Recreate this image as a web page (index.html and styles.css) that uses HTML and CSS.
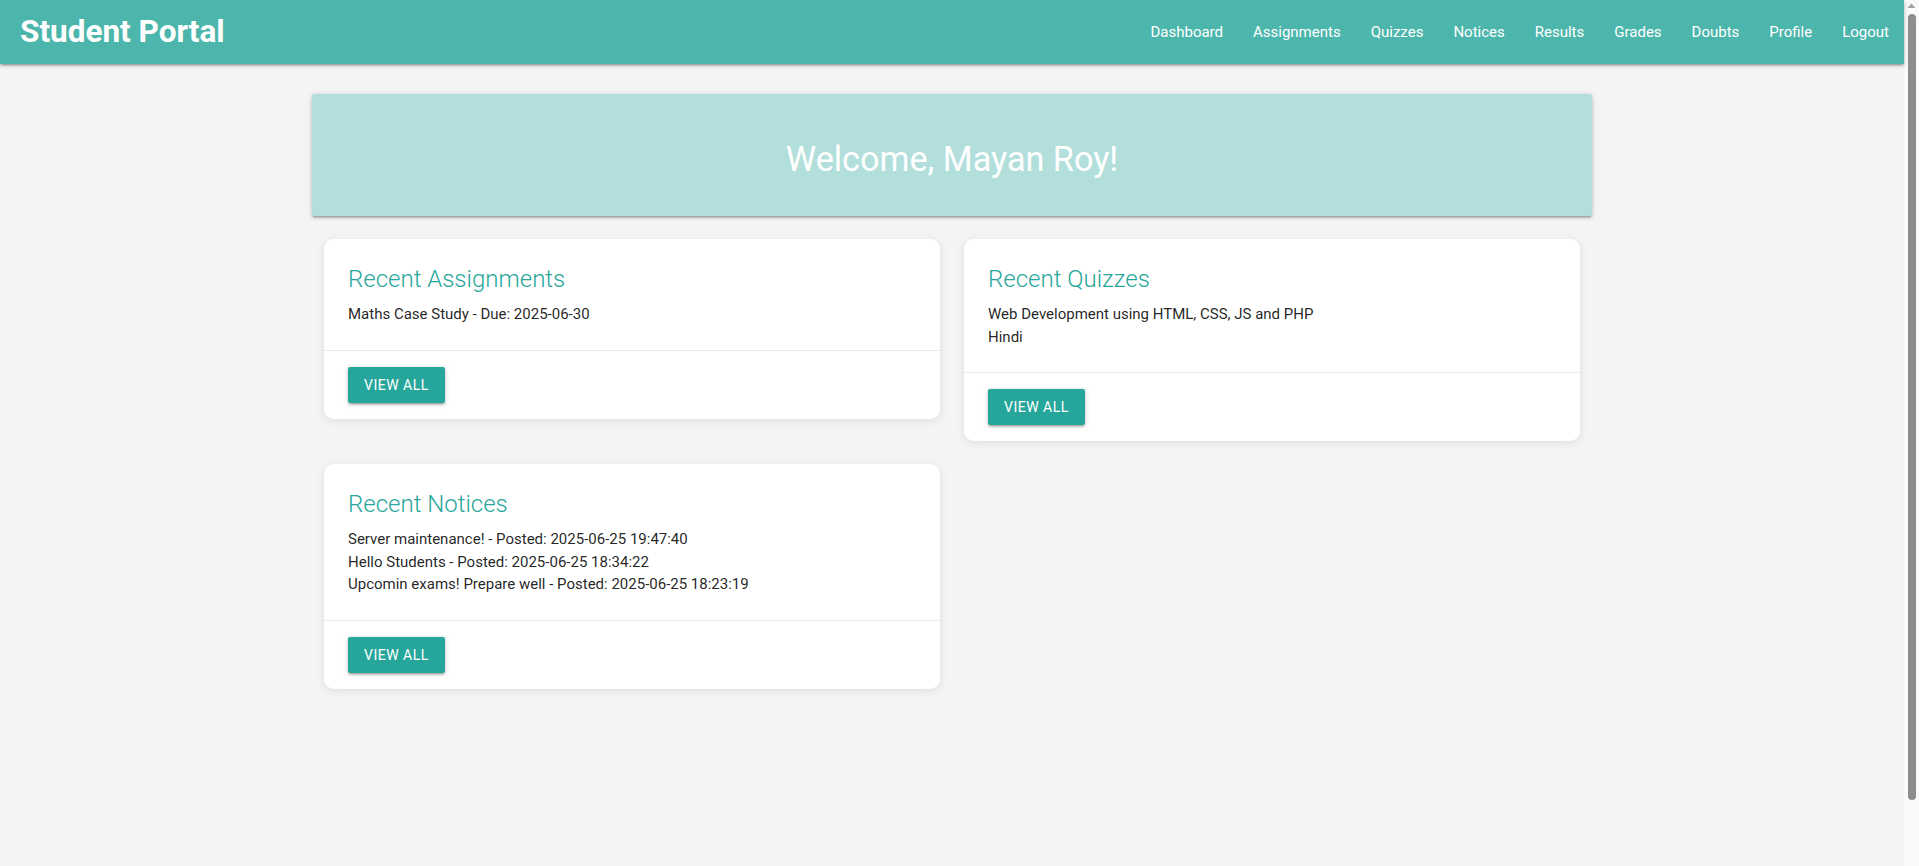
FILE: index.html
```html
<!DOCTYPE html>
<html lang="en">
<head>
<meta charset="utf-8">
<title>Student Portal</title>
<link rel="stylesheet" href="styles.css">
</head>
<body>
<div class="page">
  <nav class="navbar">
    <div class="nav-wrapper">
      <a class="brand-logo" href="#">Student Portal</a>
      <ul class="nav-links">
        <li><a href="#">Dashboard</a></li>
        <li><a href="#">Assignments</a></li>
        <li><a href="#">Quizzes</a></li>
        <li><a href="#">Notices</a></li>
        <li><a href="#">Results</a></li>
        <li><a href="#">Grades</a></li>
        <li><a href="#">Doubts</a></li>
        <li><a href="#">Profile</a></li>
        <li><a href="#">Logout</a></li>
      </ul>
    </div>
  </nav>

  <main class="container">
    <div class="welcome-panel">
      <h4 class="welcome-title">Welcome, Mayan Roy!</h4>
    </div>

    <div class="card-grid">
      <div class="col">
        <div class="card">
          <div class="card-content">
            <span class="card-title">Recent Assignments</span>
            <p class="item">Maths Case Study - Due: 2025-06-30</p>
          </div>
          <div class="card-action">
            <a class="btn" href="#">View All</a>
          </div>
        </div>
      </div>
      <div class="col">
        <div class="card">
          <div class="card-content">
            <span class="card-title">Recent Quizzes</span>
            <p class="item">Web Development using HTML, CSS, JS and PHP</p>
            <p class="item">Hindi</p>
          </div>
          <div class="card-action">
            <a class="btn" href="#">View All</a>
          </div>
        </div>
      </div>
      <div class="col">
        <div class="card">
          <div class="card-content">
            <span class="card-title">Recent Notices</span>
            <p class="item">Server maintenance! - Posted: 2025-06-25 19:47:40</p>
            <p class="item">Hello Students - Posted: 2025-06-25 18:34:22</p>
            <p class="item">Upcomin exams! Prepare well - Posted: 2025-06-25 18:23:19</p>
          </div>
          <div class="card-action">
            <a class="btn" href="#">View All</a>
          </div>
        </div>
      </div>
    </div>
  </main>
</div>
<div class="scrollbar" aria-hidden="true">
  <svg class="scroll-arrow" width="15" height="12" viewBox="0 0 15 12"><polygon points="3.5,8 7.5,3.5 11.5,8" fill="#a3a3a3"/></svg>
  <div class="scroll-thumb"></div>
</div>
</body>
</html>
```

FILE: styles.css
```css
html {
  font-size: 15px;
}

body {
  margin: 0;
  height: 866px;
  overflow: hidden;
  display: flex;
  background: #f4f4f4;
  font-family: Roboto, "Noto Sans", "Liberation Sans", sans-serif;
  font-weight: 400;
  line-height: 1.5;
  color: rgba(0, 0, 0, 0.87);
}

.page {
  flex: 1;
  min-width: 0;
}

.scrollbar {
  width: 15px;
  flex: none;
  background: #fafafa;
  display: flex;
  flex-direction: column;
  align-items: center;
}

.scroll-arrow {
  display: block;
  flex: none;
}

.scroll-thumb {
  width: 8px;
  height: 786px;
  margin-top: 2px;
  border-radius: 4px;
  background: #8e8e8e;
}

.navbar {
  background: #4db6ac;
  height: 64px;
  line-height: 64px;
  color: #fff;
  box-shadow: 0 2px 2px 0 rgba(0, 0, 0, 0.14), 0 3px 1px -2px rgba(0, 0, 0, 0.12), 0 1px 5px 0 rgba(0, 0, 0, 0.2);
  position: relative;
  z-index: 2;
}

.nav-wrapper {
  display: flex;
  justify-content: space-between;
  align-items: center;
  height: 64px;
}

.brand-logo {
  color: #fff;
  text-decoration: none;
  font-size: 31.5px;
  font-weight: 700;
  padding-left: 20px;
  line-height: 64px;
}

.nav-links {
  list-style: none;
  margin: 0;
  padding: 0;
  display: flex;
  height: 64px;
}

.nav-links a {
  display: block;
  color: #fff;
  text-decoration: none;
  font-size: 15px;
  padding: 0 15px;
  line-height: 64px;
}

.container {
  max-width: 1280px;
  width: 70%;
  margin: 0 auto;
}

.welcome-panel {
  margin: 30px 0 15px;
  padding: 24px;
  background: #b2dfdb;
  border-radius: 2px;
  text-align: center;
  box-shadow: 0 2px 2px 0 rgba(0, 0, 0, 0.14), 0 3px 1px -2px rgba(0, 0, 0, 0.12), 0 1px 5px 0 rgba(0, 0, 0, 0.2);
}

.welcome-title {
  margin: 22.8px 0 13.68px;
  font-size: 34.2px;
  line-height: 110%;
  font-weight: 400;
  color: #fff;
}

.card-grid {
  display: grid;
  grid-template-columns: 1fr 1fr;
  align-items: start;
}

.col {
  padding: 0 12px;
}

.card {
  background: #fff;
  border-radius: 10px;
  margin: 8px 0 15px;
  box-shadow: 0 2px 10px rgba(0, 0, 0, 0.09);
}

.card-content {
  padding: 24px;
}

.card-title {
  display: block;
  font-size: 24px;
  font-weight: 300;
  line-height: 32px;
  margin-bottom: 8px;
  color: #26a69a;
}

.item {
  margin: 0;
  font-size: 15px;
  line-height: 22.5px;
}

.card-action {
  border-top: 1px solid rgba(160, 160, 160, 0.2);
  padding: 16px 24px;
}

.btn {
  display: inline-block;
  height: 36px;
  line-height: 36px;
  padding: 0 16px;
  background: #26a69a;
  color: #fff;
  text-decoration: none;
  text-transform: uppercase;
  font-size: 14px;
  font-weight: 400;
  letter-spacing: 0.5px;
  border-radius: 2px;
  box-shadow: 0 2px 2px 0 rgba(0, 0, 0, 0.14), 0 3px 1px -2px rgba(0, 0, 0, 0.12), 0 1px 5px 0 rgba(0, 0, 0, 0.2);
}
```
